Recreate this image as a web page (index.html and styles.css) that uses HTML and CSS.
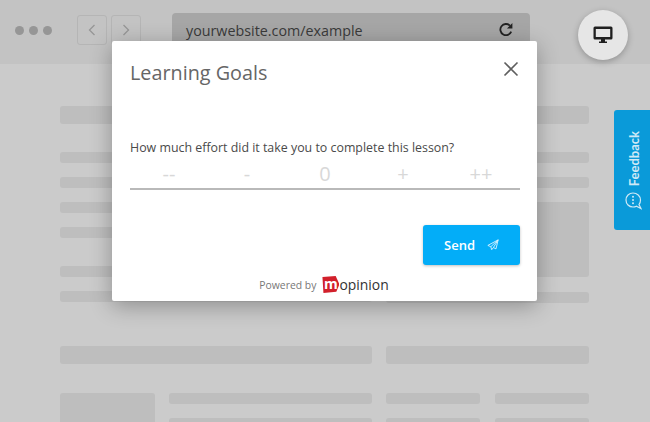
FILE: index.html
```html
<!DOCTYPE html>
<html lang="en">
<head>
  <meta charset="UTF-8" />
  <title>Learning Goals</title>
  <link rel="stylesheet" href="styles.css">
</head>
<body>

  <header class="topbar">
    <div class="dots"><span></span><span></span><span></span></div>
    <div class="nav">
      <div class="nav-btn">
        <svg width="8" height="12" viewBox="0 0 8 12"><path d="M6.5 1 L1.5 6 L6.5 11" /></svg>
      </div>
      <div class="nav-btn">
        <svg width="8" height="12" viewBox="0 0 8 12"><path d="M1.5 1 L6.5 6 L1.5 11" /></svg>
      </div>
    </div>
    <div class="url">
      <span>yourwebsite.com/example</span>
      <svg class="reload" width="16" height="16" viewBox="0 0 16 16"><path d="M13.2 9.6 A5.6 5.6 0 1 1 11.9 3.6" /><path class="fill" d="M14.4 1 L14.4 6.6 L8.9 6.6 Z" /></svg>
    </div>
  </header>

  <main class="page">
    <div class="bar tall"></div>
    <div class="split">
      <div class="col">
        <div class="bar"></div>
        <div class="bar"></div>
        <div class="bar"></div>
        <div class="bar"></div>
        <div class="bar spaced"></div>
        <div class="bar"></div>
      </div>
      <div class="col">
        <div class="bar"></div>
        <div class="bar"></div>
        <div class="block"></div>
        <div class="bar after-block"></div>
      </div>
    </div>
    <div class="split wide-gap">
      <div class="bar tall"></div>
      <div class="bar tall"></div>
    </div>
    <div class="split lower">
      <div class="media">
        <div class="thumb"></div>
        <div class="col">
          <div class="bar"></div>
          <div class="bar"></div>
        </div>
      </div>
      <div class="pair">
        <div class="col">
          <div class="bar"></div>
          <div class="bar"></div>
        </div>
        <div class="col">
          <div class="bar"></div>
          <div class="bar"></div>
        </div>
      </div>
    </div>
  </main>

  <button class="device">
    <svg width="20" height="18" viewBox="0 0 20 18"><path d="M2 .5 H18 A1.5 1.5 0 0 1 19.5 2 V12 A1.5 1.5 0 0 1 18 13.5 H2 A1.5 1.5 0 0 1 .5 12 V2 A1.5 1.5 0 0 1 2 .5 Z M2.8 3 V11 H17.2 V3 Z M8 13.5 H12 V15.5 H14 V17 H6 V15.5 H8 Z" fill-rule="evenodd" /></svg>
  </button>

  <div class="feedback">
    <span>Feedback</span>
    <svg width="17" height="18" viewBox="0 0 17 18"><path d="M8 1 C4 1 1 4 1 8 C1 12 4 15 8 15 C9.2 15 10.4 14.7 11.4 14.2 L16 16.5 L14 12.6 C15 11.4 15.5 9.8 15.5 8 C15.5 4 12 1 8 1 Z" /><circle cx="8" cy="4.8" r="1" /><circle cx="8" cy="8" r="1" /><circle cx="8" cy="11.2" r="1" /></svg>
  </div>

  <section class="modal">
    <div class="modal-head">
      <h2>Learning Goals</h2>
      <svg class="close" width="16" height="16" viewBox="0 0 16 16"><path d="M1.5 1.5 L14.5 14.5 M14.5 1.5 L1.5 14.5" /></svg>
    </div>
    <p class="question">How much effort did it take you to complete this lesson?</p>
    <div class="scale">
      <span>--</span>
      <span>-</span>
      <span>0</span>
      <span>+</span>
      <span>++</span>
    </div>
    <div class="actions">
      <button class="send">
        Send
        <svg width="12" height="12" viewBox="0 0 14 14"><path d="M13 1 L1 7.5 L4.5 9 L5.5 12.5 L7.5 10 L10.5 11.5 Z M13 1 L4.5 9 M13 1 L7.5 10" /></svg>
      </button>
    </div>
    <div class="powered">
      <span>Powered by</span>
      <div class="logo"><b>m</b>opinion</div>
    </div>
  </section>

</body>
</html>
```

FILE: styles.css
```css
* {
  box-sizing: border-box;
}

html, body {
  height: 422px;
}

body {
  position: relative;
  margin: 0;
  overflow: hidden;
  background: #cbcbcb;
  font-family: "Open Sans", sans-serif;
}

/* browser chrome */
.topbar {
  display: flex;
  align-items: center;
  height: 64px;
  padding: 0 120px 4px 15px;
  background: #c3c3c3;
}

.dots {
  display: flex;
  gap: 5px;
  width: 62px;
}

.dots span {
  width: 9px;
  height: 9px;
  border-radius: 50%;
  background: #969696;
}

.nav {
  display: flex;
  gap: 4px;
  width: 95px;
}

.nav-btn {
  display: flex;
  align-items: center;
  justify-content: center;
  width: 30px;
  height: 30px;
  border: 1px solid #b5b5b5;
  border-radius: 3px;
}

.nav-btn svg path {
  fill: none;
  stroke: #969696;
  stroke-width: 1.3;
}

.url {
  display: flex;
  align-items: center;
  justify-content: space-between;
  flex: 1;
  height: 34px;
  padding: 0 16px 0 14px;
  border-radius: 4px;
  background: #a6a6a6;
  color: #3a3a3a;
  font-size: 14.3px;
}

.reload path {
  fill: none;
  stroke: #222;
  stroke-width: 1.8;
}

.reload path.fill {
  fill: #222;
  stroke: none;
}

/* skeleton content */
.page {
  height: 358px;
  padding: 42px 61px 0 60px;
  overflow: hidden;
}

.bar {
  height: 11px;
  border-radius: 3px;
  background: #bebebe;
}

.bar.tall {
  height: 18px;
}

.split {
  display: grid;
  grid-template-columns: 312px 203px;
  gap: 14px;
  margin-top: 28px;
}

.split.wide-gap {
  margin-top: 43px;
}

.split.lower {
  margin-top: 29px;
}

.col {
  display: flex;
  flex-direction: column;
  gap: 14px;
}

.bar.spaced {
  margin-top: 14px;
}

.block {
  height: 75px;
  border-radius: 3px;
  background: #bebebe;
}

.bar.after-block {
  margin-top: 1px;
}

.media {
  display: grid;
  grid-template-columns: 95px 1fr;
  gap: 14px;
}

.thumb {
  height: 90px;
  border-radius: 3px;
  background: #bebebe;
}

.pair {
  display: grid;
  grid-template-columns: 94px 94px;
  gap: 15px;
}

/* device switch */
.device {
  position: absolute;
  top: 10px;
  left: 578px;
  display: flex;
  align-items: center;
  justify-content: center;
  width: 50px;
  height: 50px;
  padding: 0;
  border: 0;
  border-radius: 50%;
  background: #e6e6e6;
  box-shadow: 0 2px 6px rgba(0, 0, 0, 0.25);
}

.device svg path {
  fill: #1f1f1f;
}

/* feedback tab */
.feedback {
  position: absolute;
  top: 110px;
  left: 614px;
  display: flex;
  flex-direction: column;
  align-items: center;
  gap: 6px;
  width: 36px;
  height: 120px;
  padding: 21px 0 0 3px;
  border-radius: 3px 0 0 3px;
  background: #0a9ad9;
  color: #cfe9f6;
  font-family: Lato, sans-serif;
  font-size: 13px;
  font-weight: 700;
}

.feedback span {
  writing-mode: vertical-rl;
  transform: rotate(180deg);
}

.feedback svg path {
  fill: none;
  stroke: #cfe9f6;
  stroke-width: 1.2;
}

.feedback svg circle {
  fill: #cfe9f6;
}

/* modal */
.modal {
  position: absolute;
  top: 41px;
  left: 112px;
  width: 425px;
  height: 260px;
  padding: 0 17px 0 18px;
  border-radius: 2px;
  background: #fff;
  box-shadow: 0 5px 22px rgba(0, 0, 0, 0.3);
}

.modal-head {
  display: flex;
  align-items: center;
  justify-content: space-between;
  height: 64px;
  padding-bottom: 2px;
}

.modal-head h2 {
  margin: 0;
  color: #666;
  font-size: 19.8px;
  font-weight: 500;
}

.close {
  margin-right: 1px;
  margin-bottom: 7px;
}

.close path {
  fill: none;
  stroke: #5f5f5f;
  stroke-width: 1.6;
}

.question {
  margin: 34px 0 0;
  color: #4a4a4a;
  font-size: 12.4px;
  line-height: 17px;
}

.scale {
  display: grid;
  grid-template-columns: repeat(5, 1fr);
  height: 34px;
  padding-top: 6px;
  border-bottom: 2px solid #b9b9b9;
  color: #d8d8d8;
  font-size: 20px;
  line-height: 24px;
  text-align: center;
}

.actions {
  display: flex;
  justify-content: flex-end;
  margin-top: 35px;
}

.send {
  display: flex;
  align-items: center;
  justify-content: center;
  gap: 12px;
  width: 97px;
  height: 40px;
  border: 0;
  border-radius: 3px;
  background: #03adf8;
  box-shadow: 0 1px 3px rgba(0, 0, 0, 0.25);
  color: #fff;
  font-family: "Open Sans", sans-serif;
  font-size: 13px;
  font-weight: 600;
}

.send svg path {
  fill: none;
  stroke: #e4f6ff;
  stroke-width: 1;
}

.powered {
  display: flex;
  align-items: center;
  justify-content: center;
  gap: 6px;
  margin-top: 10px;
  padding-right: 2px;
  color: #777;
  font-size: 10.4px;
}

.logo {
  display: flex;
  align-items: center;
  color: #333;
  font-size: 13.9px;
  font-weight: 500;
}

.logo b {
  width: 17px;
  height: 17px;
  background: #d2202b;
  clip-path: polygon(0 6%, 78% 0, 100% 48%, 82% 92%, 6% 100%);
  color: #fff;
  font-size: 14px;
  line-height: 15px;
  text-align: center;
}
```
